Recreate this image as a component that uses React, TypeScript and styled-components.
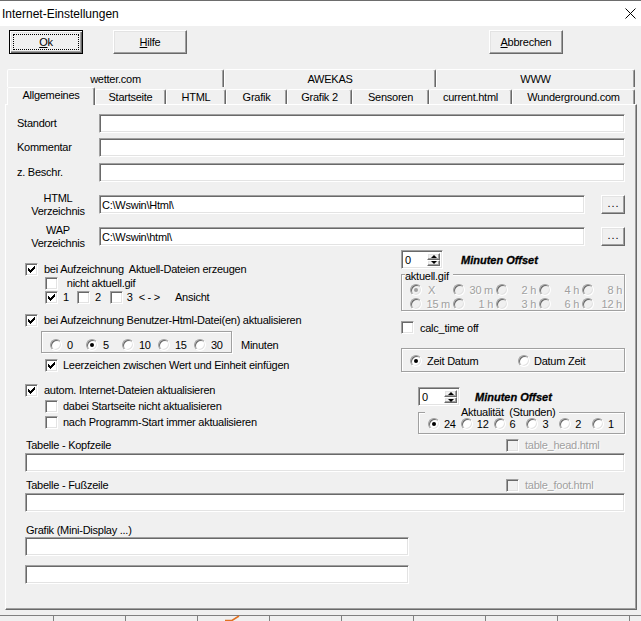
import React from "react";
import styled, { createGlobalStyle } from "styled-components";

const GlobalStyle = createGlobalStyle`
  html, body {
    margin: 0;
    padding: 0;
    background: #f0f0f0;
  }
  body {
    font-family: "Liberation Sans", Arial, sans-serif;
    font-size: 11px;
    letter-spacing: -0.25px;
    color: #000;
  }
  * {
    box-sizing: border-box;
  }
`;

const sunken = `
  border: 1px solid;
  border-color: #a0a0a0 #fff #fff #a0a0a0;
  box-shadow: inset 1px 1px #696969, inset -1px -1px #e3e3e3;
`;

const raised = `
  border: 1px solid;
  border-color: #fff #696969 #696969 #fff;
  box-shadow: inset -1px -1px #a0a0a0, inset 1px 1px #e3e3e3;
`;

const etched = `
  border: 1px solid #a0a0a0;
  box-shadow: 1px 1px 0 #fff, inset 1px 1px 0 #fff;
`;

const Window = styled.div`
  width: 641px;
  height: 621px;
  display: flex;
  flex-direction: column;
  background: #f0f0f0;
  overflow: hidden;
`;

const TitleBar = styled.div`
  height: 26px;
  flex: none;
  background: #fff;
  border-top: 1px solid #6d6d6d;
  display: flex;
  align-items: center;
  justify-content: space-between;
  padding: 0 5px 0 2px;
  font-size: 12px;
  letter-spacing: 0;
`;

const ButtonRow = styled.div`
  display: flex;
  height: 24px;
  margin-top: 4px;
  padding: 0 78px 0 9px;
  flex: none;
`;

const PushButton = styled.button<{ $default?: boolean; $ml?: number; $push?: boolean }>`
  position: relative;
  width: 74px;
  height: 24px;
  padding: 0;
  font: inherit;
  letter-spacing: inherit;
  color: #000;
  background: #f0f0f0;
  margin-left: ${(p) => (p.$push ? "auto" : `${p.$ml ?? 0}px`)};
  ${(p) =>
    p.$default
      ? `
    border: 1px solid #000;
    box-shadow: inset 1px 1px #fff, inset -1px -1px #696969, inset -2px -2px #a0a0a0, inset 2px 2px #e3e3e3;
    &::after {
      content: "";
      position: absolute;
      inset: 3px;
      border: 1px dotted #000;
    }
  `
      : raised}
  u {
    text-decoration: underline;
  }
`;

const TabControl = styled.div`
  flex: 1;
  display: flex;
  flex-direction: column;
  margin: 15px 4px 0 5px;
`;

const TabRow = styled.div<{ $back?: boolean }>`
  display: flex;
  align-items: flex-end;
  height: ${(p) => (p.$back ? 18 : 17)}px;
  padding: 0 2px;
  flex: none;
`;

const Tab = styled.div<{ $w: number; $active?: boolean; $back?: boolean }>`
  width: ${(p) => p.$w}px;
  height: ${(p) => (p.$back || p.$active ? 18 : 15)}px;
  flex: none;
  display: flex;
  align-items: center;
  justify-content: center;
  border: 1px solid;
  border-bottom: none;
  border-color: #fff #696969 transparent #fff;
  border-radius: 2px 2px 0 0;
  box-shadow: inset -1px 0 #a0a0a0;
  background: #f0f0f0;
  white-space: nowrap;
  ${(p) =>
    p.$active &&
    `
    position: relative;
    z-index: 1;
    margin-bottom: -1px;
    padding-bottom: 4px;
  `}
`;

const Panel = styled.div`
  flex: 1;
  display: flex;
  flex-direction: column;
  border: 1px solid;
  border-color: #fff #696969 #696969 #fff;
  box-shadow: inset -1px -1px #a0a0a0;
  padding: 9px 11px 0 11px;
`;

const FieldRow = styled.div<{ $mt?: number }>`
  display: flex;
  align-items: center;
  height: 19px;
  margin-top: ${(p) => p.$mt ?? 0}px;
`;

const FieldLabel = styled.div<{ $center?: boolean }>`
  width: 82px;
  flex: none;
  line-height: 13px;
  text-align: ${(p) => (p.$center ? "center" : "left")};
`;

const TextBox = styled.input<{ $w?: number; $mt?: number; $grow?: boolean }>`
  ${sunken}
  display: block;
  height: 19px;
  width: ${(p) => (p.$w ? `${p.$w}px` : "auto")};
  flex: ${(p) => (p.$grow ? "1" : "none")};
  min-width: 0;
  margin-top: ${(p) => p.$mt ?? 0}px;
  padding: 0 2px;
  background: #fff;
  font: inherit;
  letter-spacing: inherit;
  color: #000;
  outline: none;
`;

const DotsButton = styled.div`
  ${raised}
  width: 24px;
  height: 19px;
  margin-left: 16px;
  flex: none;
  display: flex;
  align-items: center;
  justify-content: center;
  letter-spacing: 1px;
  padding: 0 0 3px 1px;
  background: #f0f0f0;
`;

const MiddleSection = styled.div`
  display: flex;
  margin-top: 4px;
  padding-left: 8px;
  height: 184px;
`;

const LeftCol = styled.div`
  flex: 1;
  display: flex;
  flex-direction: column;
`;

const RightCol = styled.div`
  width: 224px;
  flex: none;
  display: flex;
  flex-direction: column;
  align-items: flex-start;
`;

const CheckRow = styled.div<{ $mt?: number; $indent?: number }>`
  display: flex;
  align-items: center;
  height: 14px;
  margin-top: ${(p) => p.$mt ?? 0}px;
  margin-left: ${(p) => p.$indent ?? 0}px;
  white-space: pre;
`;

const Box = styled.span<{ $disabled?: boolean }>`
  ${sunken}
  width: 13px;
  height: 13px;
  flex: none;
  display: flex;
  align-items: center;
  justify-content: center;
  background: ${(p) => (p.$disabled ? "#f0f0f0" : "#fff")};
`;

const Label = styled.span<{ $ml?: number; $mr?: number; $gray?: boolean }>`
  margin-left: ${(p) => p.$ml ?? 6}px;
  margin-right: ${(p) => p.$mr ?? 0}px;
  white-space: pre;
  color: ${(p) => (p.$gray ? "#a0a0a0" : "#000")};
  text-shadow: ${(p) => (p.$gray ? "1px 1px 0 #fff" : "none")};
`;

const Dot = styled.span<{ $checked?: boolean; $disabled?: boolean }>`
  width: 12px;
  height: 12px;
  flex: none;
  border-radius: 50%;
  border: 1px solid;
  border-color: #a0a0a0 #fff #fff #a0a0a0;
  box-shadow: inset 1px 1px #696969, inset -1px -1px #e3e3e3;
  background: ${(p) => (p.$disabled ? "#f0f0f0" : "#fff")};
  &::after {
    content: "";
    display: ${(p) => (p.$checked ? "block" : "none")};
    width: 4px;
    height: 4px;
    margin: 3px;
    border-radius: 50%;
    background: ${(p) => (p.$disabled ? "#a0a0a0" : "#000")};
  }
`;

const FrameRow = styled.div`
  display: flex;
  align-items: flex-start;
  margin: 4px 0 0 16px;
`;

const RadioFrame = styled.div`
  ${etched}
  width: 191px;
  height: 22px;
  display: flex;
  padding: 7px 0 0 8px;
`;

const RadioItem = styled.div<{ $w?: number }>`
  display: flex;
  align-items: center;
  height: 12px;
  width: ${(p) => (p.$w ? `${p.$w}px` : "auto")};
  flex: none;
`;

const PlainText = styled.span<{ $ml?: number; $mt?: number }>`
  margin-left: ${(p) => p.$ml ?? 0}px;
  margin-top: ${(p) => p.$mt ?? 0}px;
  white-space: pre;
`;

const SpinRow = styled.div<{ $ml?: number; $mt?: number }>`
  display: flex;
  align-items: center;
  height: 19px;
  margin-left: ${(p) => p.$ml ?? 0}px;
  margin-top: ${(p) => p.$mt ?? 0}px;
`;

const SpinBox = styled.div`
  ${sunken}
  width: 42px;
  height: 19px;
  display: flex;
  background: #fff;
  padding: 2px;
`;

const SpinValue = styled.span`
  flex: 1;
  line-height: 14px;
  padding-left: 1px;
`;

const SpinButtons = styled.div`
  width: 13px;
  display: flex;
  flex-direction: column;
`;

const SpinButton = styled.span<{ $down?: boolean }>`
  ${raised}
  flex: 1;
  display: flex;
  align-items: center;
  justify-content: center;
  background: #f0f0f0;
  &::after {
    content: "";
    width: 0;
    height: 0;
    border-left: 3px solid transparent;
    border-right: 3px solid transparent;
    ${(p) => (p.$down ? "border-top: 3px solid #000;" : "border-bottom: 3px solid #000;")}
  }
`;

const OffsetText = styled.span<{ $ml: number }>`
  margin-left: ${(p) => p.$ml}px;
  font-weight: bold;
  font-style: italic;
  letter-spacing: 0;
  -webkit-text-stroke: 0.3px #000;
  white-space: nowrap;
`;

const GroupBox = styled.div<{ $mt: number; $h: number; $ml?: number; $w: number }>`
  ${etched}
  width: ${(p) => p.$w}px;
  height: ${(p) => p.$h}px;
  margin-top: ${(p) => p.$mt}px;
  margin-left: ${(p) => p.$ml ?? 0}px;
  display: flex;
  flex-direction: column;
  align-items: flex-start;
`;

const Legend = styled.span<{ $mt: number; $ml: number; $pl?: number }>`
  display: block;
  margin-top: ${(p) => p.$mt}px;
  margin-left: ${(p) => p.$ml}px;
  padding: 0 4px 0 ${(p) => p.$pl ?? 0}px;
  line-height: 12px;
  background: #f0f0f0;
  white-space: pre;
`;

const GifGrid = styled.div`
  display: grid;
  grid-template-columns: repeat(5, 43px);
  row-gap: 1px;
  margin-top: 1px;
  padding-left: 8px;
`;

const GifCell = styled.div`
  display: flex;
  align-items: center;
  height: 13px;
`;

const GifLabel = styled.span<{ $left?: boolean }>`
  flex: 1;
  text-align: ${(p) => (p.$left ? "left" : "right")};
  padding: ${(p) => (p.$left ? "0 0 0 6px" : "0 3px 0 0")};
  color: #a0a0a0;
  text-shadow: 1px 1px 0 #fff;
  white-space: pre;
`;

const GroupRow = styled.div<{ $pt: number; $pl: number }>`
  display: flex;
  padding: ${(p) => p.$pt}px 0 0 ${(p) => p.$pl}px;
`;

const BottomSection = styled.div`
  display: flex;
  flex-direction: column;
  margin-top: 4px;
  padding-left: 8px;
`;

const CaptionRow = styled.div<{ $mt?: number }>`
  display: flex;
  align-items: center;
  height: 14px;
  margin-top: ${(p) => p.$mt ?? 0}px;
`;

const Caption = styled.span`
  margin-left: 1px;
  white-space: pre;
`;

const SideCheck = styled.div`
  display: flex;
  align-items: center;
  width: 119px;
  margin-left: auto;
`;

const RulerStrip = styled.svg`
  display: block;
  flex: none;
`;

function CheckBox({ checked, disabled }: { checked?: boolean; disabled?: boolean }) {
  return (
    <Box $disabled={disabled}>
      {checked && (
        <svg width="7" height="7" viewBox="0 0 7 7" shapeRendering="crispEdges">
          <path d="M0 2h1v1h1v1h1v-1h1v-1h1v-1h1v-1h1v3h-1v1h-1v1h-1v1h-1v1h-1v-1h-1v-1h-1z" fill="#000" />
        </svg>
      )}
    </Box>
  );
}

function Spinner() {
  return (
    <SpinBox>
      <SpinValue>0</SpinValue>
      <SpinButtons>
        <SpinButton />
        <SpinButton $down />
      </SpinButtons>
    </SpinBox>
  );
}

const backTabs = [
  { label: "wetter.com", w: 217 },
  { label: "AWEKAS", w: 212 },
  { label: "WWW", w: 199 },
];

const frontTabs = [
  { label: "Allgemeines", w: 88, active: true },
  { label: "Startseite", w: 71 },
  { label: "HTML", w: 60 },
  { label: "Grafik", w: 61 },
  { label: "Grafik 2", w: 65 },
  { label: "Sensoren", w: 77 },
  { label: "current.html", w: 83 },
  { label: "Wunderground.com", w: 123 },
];

const gifRows = [
  ["X", "30 m", "2 h", "4 h", "8 h"],
  ["15 m", "1 h", "3 h", "6 h", "12 h"],
];

const hours = ["24", "12", "6", "3", "2", "1"];

export default function App() {
  return (
    <>
      <GlobalStyle />
      <Window>
        <TitleBar>
          <span>Internet-Einstellungen</span>
          <svg width="11" height="11" viewBox="0 0 11 11">
            <path d="M0.5 0.5L10.5 10.5M10.5 0.5L0.5 10.5" stroke="#000" strokeWidth="1" />
          </svg>
        </TitleBar>

        <ButtonRow>
          <PushButton $default>
            <u>O</u>k
          </PushButton>
          <PushButton $ml={30}>
            <u>H</u>ilfe
          </PushButton>
          <PushButton $push>
            <u>A</u>bbrechen
          </PushButton>
        </ButtonRow>

        <TabControl>
          <TabRow $back>
            {backTabs.map((t) => (
              <Tab key={t.label} $w={t.w} $back>
                {t.label}
              </Tab>
            ))}
          </TabRow>
          <TabRow>
            {frontTabs.map((t) => (
              <Tab key={t.label} $w={t.w} $active={t.active}>
                {t.label}
              </Tab>
            ))}
          </TabRow>

          <Panel>
            <FieldRow>
              <FieldLabel>Standort</FieldLabel>
              <TextBox readOnly defaultValue="" $grow />
            </FieldRow>
            <FieldRow $mt={5}>
              <FieldLabel>Kommentar</FieldLabel>
              <TextBox readOnly defaultValue="" $grow />
            </FieldRow>
            <FieldRow $mt={6}>
              <FieldLabel>z. Beschr.</FieldLabel>
              <TextBox readOnly defaultValue="" $grow />
            </FieldRow>
            <FieldRow $mt={13}>
              <FieldLabel $center>
                HTML
                <br />
                Verzeichnis
              </FieldLabel>
              <TextBox readOnly defaultValue={"C:\\Wswin\\Html\\"} $grow />
              <DotsButton>...</DotsButton>
            </FieldRow>
            <FieldRow $mt={13}>
              <FieldLabel $center>
                WAP
                <br />
                Verzeichnis
              </FieldLabel>
              <TextBox readOnly defaultValue={"C:\\Wswin\\html\\"} $grow />
              <DotsButton>...</DotsButton>
            </FieldRow>

            <MiddleSection>
              <LeftCol>
                <CheckRow $mt={12}>
                  <CheckBox checked />
                  <Label>bei Aufzeichnung  Aktuell-Dateien erzeugen</Label>
                </CheckRow>
                <CheckRow $indent={20}>
                  <CheckBox />
                  <Label>{"\u00a0nicht aktuell.gif"}</Label>
                </CheckRow>
                <CheckRow $indent={20}>
                  <CheckBox checked />
                  <Label $ml={5} $mr={8}>1</Label>
                  <CheckBox />
                  <Label $ml={5} $mr={9}>2</Label>
                  <CheckBox />
                  <Label $ml={4}>3</Label>
                  <Label $ml={6}>{"< - >"}</Label>
                  <Label $ml={15}>Ansicht</Label>
                </CheckRow>
                <CheckRow $mt={9}>
                  <CheckBox checked />
                  <Label>bei Aufzeichnung Benutzer-Html-Datei(en) aktualisieren</Label>
                </CheckRow>
                <FrameRow>
                  <RadioFrame>
                    {["0", "5", "10", "15", "30"].map((v) => (
                      <RadioItem key={v} $w={36}>
                        <Dot $checked={v === "5"} />
                        <Label $ml={5}>{v}</Label>
                      </RadioItem>
                    ))}
                  </RadioFrame>
                  <PlainText $ml={9} $mt={8}>
                    Minuten
                  </PlainText>
                </FrameRow>
                <CheckRow $mt={5} $indent={20}>
                  <CheckBox checked />
                  <Label $ml={5}>Leerzeichen zwischen Wert und Einheit einfügen</Label>
                </CheckRow>
                <CheckRow $mt={11}>
                  <CheckBox checked />
                  <Label>autom. Internet-Dateien aktualisieren</Label>
                </CheckRow>
                <CheckRow $mt={2} $indent={20}>
                  <CheckBox />
                  <Label $ml={5}>dabei Startseite nicht aktualisieren</Label>
                </CheckRow>
                <CheckRow $mt={2} $indent={20}>
                  <CheckBox />
                  <Label $ml={5}>nach Programm-Start immer aktualisieren</Label>
                </CheckRow>
              </LeftCol>

              <RightCol>
                <SpinRow>
                  <Spinner />
                  <OffsetText $ml={18}>Minuten Offset</OffsetText>
                </SpinRow>
                <GroupBox $mt={5} $h={37} $w={224}>
                  <Legend $mt={-5} $ml={3}>
                    aktuell.gif
                  </Legend>
                  <GifGrid>
                    {gifRows.map((row, ri) =>
                      row.map((v, ci) => (
                        <GifCell key={v}>
                          <Dot $disabled $checked={ri === 0 && ci === 0} />
                          <GifLabel $left={ri === 0 && ci === 0}>{v}</GifLabel>
                        </GifCell>
                      ))
                    )}
                  </GifGrid>
                </GroupBox>
                <CheckRow $mt={10}>
                  <CheckBox />
                  <Label>calc_time off</Label>
                </CheckRow>
                <GroupBox $mt={13} $h={25} $w={224}>
                  <GroupRow $pt={6} $pl={8}>
                    <RadioItem $w={108}>
                      <Dot $checked />
                      <Label $ml={5}>Zeit Datum</Label>
                    </RadioItem>
                    <RadioItem>
                      <Dot />
                      <Label $ml={4}>Datum Zeit</Label>
                    </RadioItem>
                  </GroupRow>
                </GroupBox>
                <SpinRow $ml={17} $mt={15}>
                  <Spinner />
                  <OffsetText $ml={15}>Minuten Offset</OffsetText>
                </SpinRow>
                <GroupBox $mt={6} $h={22} $ml={17} $w={207}>
                  <Legend $mt={-7} $ml={6} $pl={36}>
                    Aktualität  (Stunden)
                  </Legend>
                  <GroupRow $pt={0} $pl={9}>
                    {hours.map((h) => (
                      <RadioItem key={h} $w={32.8}>
                        <Dot $checked={h === "24"} />
                        <Label $ml={4}>{h}</Label>
                      </RadioItem>
                    ))}
                  </GroupRow>
                </GroupBox>
              </RightCol>
            </MiddleSection>

            <BottomSection>
              <CaptionRow>
                <Caption>Tabelle - Kopfzeile</Caption>
                <SideCheck>
                  <CheckBox disabled />
                  <Label $gray>table_head.html</Label>
                </SideCheck>
              </CaptionRow>
              <TextBox readOnly defaultValue="" $mt={1} />
              <CaptionRow $mt={6}>
                <Caption>Tabelle - Fußzeile</Caption>
                <SideCheck>
                  <CheckBox disabled />
                  <Label $gray>table_foot.html</Label>
                </SideCheck>
              </CaptionRow>
              <TextBox readOnly defaultValue="" $mt={1} />
              <CaptionRow $mt={11}>
                <Caption>Grafik (Mini-Display ...)</Caption>
              </CaptionRow>
              <TextBox readOnly defaultValue="" $w={384} />
              <TextBox readOnly defaultValue="" $w={384} $mt={9} />
            </BottomSection>
          </Panel>
        </TabControl>

        <RulerStrip width="641" height="11" viewBox="0 0 641 11">
          <rect x="0" y="0" width="641" height="11" fill="#f0f0f0" />
          <line x1="0" y1="5.5" x2="641" y2="5.5" stroke="#808080" />
          {[53, 125, 197, 269, 341, 413, 485, 557, 629].map((x) => (
            <line key={x} x1={x + 0.5} y1="5" x2={x + 0.5} y2="11" stroke="#808080" />
          ))}
          <path d="M225 10.5H232L239 6" stroke="#e07020" strokeWidth="1.5" fill="none" />
        </RulerStrip>
      </Window>
    </>
  );
}
